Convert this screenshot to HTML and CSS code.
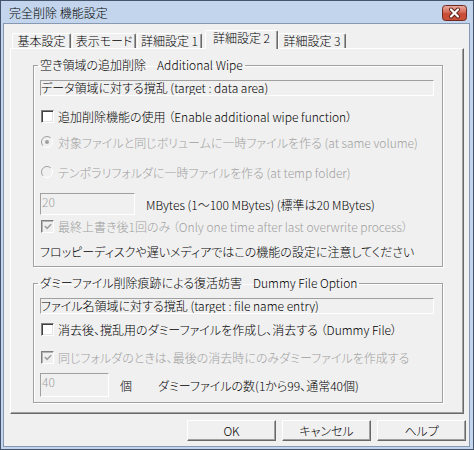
FILE: index.html
```html
<!DOCTYPE html>
<html lang="ja">
<head>
<meta charset="utf-8">
<title>完全削除 機能設定</title>
<link rel="stylesheet" href="styles.css">
</head>
<body>
<div class="window">
  <div class="titlebar">
    <span class="title">完全削除 機能設定</span>
    <span class="close">
      <svg width="25" height="16" viewBox="0 0 25 16">
        <defs>
          <linearGradient id="cg" x1="0" y1="0" x2="0" y2="1">
            <stop offset="0" stop-color="#eab0a4"/>
            <stop offset="0.45" stop-color="#d56a58"/>
            <stop offset="0.55" stop-color="#c84b37"/>
            <stop offset="1" stop-color="#c9513c"/>
          </linearGradient>
        </defs>
        <rect x="0.5" y="0.5" width="24" height="15" rx="3" fill="url(#cg)" stroke="#6f2a22"/>
        <path d="M9 4.5 L16 11.5 M16 4.5 L9 11.5" stroke="#5a2018" stroke-width="4" stroke-linecap="round"/>
        <path d="M9 4.5 L16 11.5 M16 4.5 L9 11.5" stroke="#ffffff" stroke-width="2.2" stroke-linecap="round"/>
      </svg>
    </span>
  </div>
  <div class="client">
    <div class="tabs">
      <div class="tab t1">基本設定</div>
      <div class="tab t2">表示モード</div>
      <div class="tab t3">詳細設定 1</div>
      <div class="tab t4 active">詳細設定 2</div>
      <div class="tab t5">詳細設定 3</div>
    </div>
    <div class="panel">
      <fieldset class="group g1">
        <legend>空き領域の追加削除<span class="en">Additional Wipe</span></legend>
        <div class="static">データ領域に対する撹乱 (target : data area)</div>
        <div class="row r1"><span class="cb"></span><span>追加削除機能の使用 （Enable additional wipe function）</span></div>
        <div class="row r2 dis">
          <svg class="radio" width="12" height="12" viewBox="0 0 12 12">
            <circle cx="6" cy="6" r="5.5" fill="#f0f0f0"/>
            <path d="M2.1 9.9 A5.5 5.5 0 0 1 9.9 2.1" fill="none" stroke="#a0a0a0"/>
            <path d="M9.9 2.1 A5.5 5.5 0 0 1 2.1 9.9" fill="none" stroke="#ffffff"/>
            <circle cx="6" cy="6" r="2" fill="#a0a0a0"/>
          </svg>
          <span>対象ファイルと同じボリュームに一時ファイルを作る (at same volume)</span>
        </div>
        <div class="row r3 dis">
          <svg class="radio" width="12" height="12" viewBox="0 0 12 12">
            <circle cx="6" cy="6" r="5.5" fill="#f0f0f0"/>
            <path d="M2.1 9.9 A5.5 5.5 0 0 1 9.9 2.1" fill="none" stroke="#a0a0a0"/>
            <path d="M9.9 2.1 A5.5 5.5 0 0 1 2.1 9.9" fill="none" stroke="#ffffff"/>
          </svg>
          <span>テンポラリフォルダに一時ファイルを作る (at temp folder)</span>
        </div>
        <div class="row r4"><span class="edit e20">20</span><span>MBytes (1～100 MBytes) (標準は20 MBytes)</span></div>
        <div class="row r5 dis">
          <span class="cb off">
            <svg width="11" height="11" viewBox="0 0 11 11"><path d="M2 5 L4.5 7.5 L9 3" fill="none" stroke="#a0a0a0" stroke-width="1.8"/></svg>
          </span>
          <span>最終上書き後1回のみ （Only one time after last overwrite process）</span>
        </div>
        <div class="row r6 note">フロッピーディスクや遅いメディアではこの機能の設定に注意してください</div>
      </fieldset>
      <fieldset class="group g2">
        <legend>ダミーファイル削除痕跡による復活妨害<span class="en">Dummy File Option</span></legend>
        <div class="static">ファイル名領域に対する撹乱 (target : file name entry)</div>
        <div class="row s1"><span class="cb"></span><span>消去後、撹乱用のダミーファイルを作成し、消去する （Dummy File）</span></div>
        <div class="row s2 dis">
          <span class="cb off">
            <svg width="11" height="11" viewBox="0 0 11 11"><path d="M2 5 L4.5 7.5 L9 3" fill="none" stroke="#a0a0a0" stroke-width="1.8"/></svg>
          </span>
          <span>同じフォルダのときは、最後の消去時にのみダミーファイルを作成する</span>
        </div>
        <div class="row s3"><span class="edit e40">40</span><span class="unit">個</span><span>ダミーファイルの数(1から99、通常40個)</span></div>
      </fieldset>
    </div>
    <div class="btns">
      <button class="btn">OK</button>
      <button class="btn">キャンセル</button>
      <button class="btn">ヘルプ</button>
    </div>
  </div>
</div>
</body>
</html>
```

FILE: styles.css
```css
* { box-sizing: border-box; }
body {
  margin: 0;
  font-family: "Noto Sans CJK JP", "Noto Sans", sans-serif;
  font-size: 12px;
  font-weight: 300;
  color: #000;
  font-feature-settings: "palt";
}
.window {
  width: 474px;
  height: 450px;
  border: 1px solid #44546b;
  background: #c2d5ec;
  display: flex;
  flex-direction: column;
}
.titlebar {
  height: 22px;
  display: flex;
  align-items: flex-start;
  justify-content: space-between;
  padding: 0 6px 0 8px;
}
.title { line-height: 14px; padding-top: 5px; }
.close { display: flex; margin-top: 4px; }
.client {
  flex: 1;
  margin: 0 3px 2px 2px;
  background: #f0f0f0;
  border: 1px solid #8799b2;
  padding: 6px 5px 0 6px;
  display: flex;
  flex-direction: column;
}
.tabs {
  display: flex;
  align-items: flex-end;
  height: 18px;
}
.tab {
  height: 15px;
  border-top: 1px solid #fff;
  border-left: 1px solid #fff;
  border-right: 1px solid #696969;
  box-shadow: inset -1px 0 0 #a0a0a0;
  border-radius: 2px 2px 0 0;
  text-align: center;
  line-height: 14px;
  white-space: nowrap;
}
.t1 { width: 59px; margin-left: 2px; }
.t2 { width: 64px; margin-left: 1px; }
.t3 { width: 65px; margin-left: 1px; }
.t4 { width: 73px; margin-left: 3px; }
.t5 { width: 68px; }
.tab.active {
  height: 19px;
  margin-bottom: -1px;
  background: #f0f0f0;
  position: relative;
  z-index: 1;
}
.panel {
  background: #f0f0f0;
  border: 1px solid;
  border-color: #fff #696969 #696969 #fff;
  box-shadow: inset -1px -1px 0 #a0a0a0;
  padding: 8px 20px 10px 22px;
}
.group {
  margin: 0;
  padding: 0 8px 5px 6px;
  border: 1px solid #a0a0a0;
  box-shadow: inset 1px 1px 0 #fff, 1px 1px 0 #fff;
  min-inline-size: 0;
}
.group legend {
  padding: 0 2px;
  margin-left: -2px;
  line-height: 16px;
  white-space: nowrap;
}
.group legend .en { margin-left: 11px; }
.g2 { margin-top: 8px; }
.static {
  margin-top: 7px;
  height: 16px;
  border: 1px solid;
  border-color: #a0a0a0 #fff #fff #a0a0a0;
  line-height: 14px;
  white-space: nowrap;
  overflow: hidden;
}
.row {
  display: flex;
  align-items: center;
  height: 20px;
  gap: 4px;
  padding-left: 1px;
  white-space: nowrap;
}
.dis { color: #a0a0a0; }
.r1 { margin-top: 10px; }
.r2 { margin-top: 6px; gap: 4px; }
.r3 { margin-top: 10px; }
.r4 { margin-top: 11px; height: 22px; gap: 11px; padding-left: 0; }
.r5 { margin-top: 1px; }
.r6 { margin-top: 5px; padding-left: 0; }
.s1 { margin-top: 5px; }
.s2 { margin-top: 8px; }
.s3 { margin-top: 6px; height: 24px; gap: 11px; padding-left: 0; }
.s3 .unit { margin-right: 15px; }
.cb {
  width: 13px;
  height: 13px;
  flex: none;
  border: 1px solid;
  border-color: #808080 #fff #fff #808080;
  box-shadow: inset 1px 1px 0 #404040, inset -1px -1px 0 #e3e3e3;
  background: #fff;
  display: flex;
  align-items: center;
  justify-content: center;
}
.cb.off {
  background: #f0f0f0;
  box-shadow: inset 1px 1px 0 #b4b4b4;
}
.cb.off svg { margin: 1px 0 0 1px; }
.radio { flex: none; margin-right: 1px; }
.edit {
  flex: none;
  height: 100%;
  border: 1px solid;
  border-color: #a0a0a0 #fff #fff #a0a0a0;
  color: #a0a0a0;
  line-height: 12px;
  padding: 2px 0 0 1px;
  background: #f0f0f0;
}
.e20 { width: 95px; }
.e40 { width: 69px; }
.btns {
  display: flex;
  justify-content: flex-end;
  gap: 6px;
  margin-top: 6px;
  margin-right: -2px;
}
.btn {
  width: 89px;
  height: 21px;
  border: 1px solid;
  border-color: #fff #696969 #696969 #fff;
  box-shadow: inset -1px -1px 0 #a0a0a0;
  background: #f0f0f0;
  font: inherit;
  color: #000;
  line-height: 16px;
  padding: 0;
  border-radius: 0;
}
```
